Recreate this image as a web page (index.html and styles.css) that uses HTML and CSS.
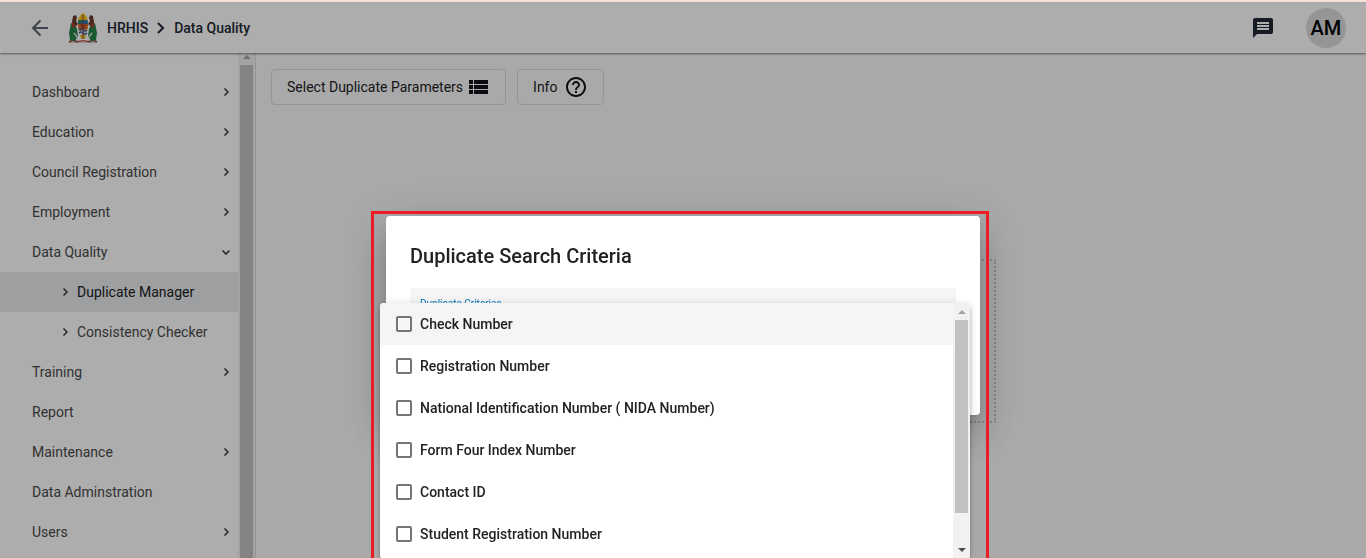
FILE: index.html
```html
<!DOCTYPE html>
<html lang="en">
<head>
<meta charset="utf-8">
<title>HRHIS - Data Quality</title>
<link rel="stylesheet" href="styles.css">
</head>
<body>
<svg class="sprite" aria-hidden="true">
  <symbol id="chevron" viewBox="0 0 10 10"><path d="M3.500 1.500 7 5 3.500 8.500" fill="none" stroke="currentColor" stroke-width="1.300"/></symbol>
</svg>
<div class="strip"></div>
<div class="app">
  <header class="header">
    <button class="icon-button" aria-label="Back"><svg width="18" height="18" viewBox="0 0 18 18" fill="none" stroke="currentColor" stroke-width="2"><path d="M17 9H2.500M9.500 1.500 2 9 9.500 16.500"/></svg></button>
    <svg class="crest" width="30" height="32" viewBox="0 0 30 32">
      <path d="M1 29Q5 26 9 28 L12 25H18L21 28Q25 26 29 29L29 31H1Z" fill="#d8d0c8"/>
      <path d="M1 30 5 28 9 30M21 30 25 28 29 30" stroke="#8a4a40" stroke-width="1.500" fill="none"/>
      <path d="M4 10 5 4 8 3 9 6 8 9 10 12 8 14 5 13Z" fill="#6b3a30"/>
      <path d="M26 10 25 4 22 3 21 6 22 9 20 12 22 14 25 13Z" fill="#6b3a30"/>
      <path d="M3 11 7 12 9 17 10 24 7 29 2 28 1 21Z" fill="#26854a"/>
      <path d="M27 11 23 12 21 17 20 24 23 29 28 28 29 21Z" fill="#26854a"/>
      <path d="M4 10 7 12 7 16 4 15M26 10 23 12 23 16 26 15" fill="#a63b32"/>
      <path d="M6 21 9 25M24 21 21 25" stroke="#e4dcd4" stroke-width="1.500"/>
      <path d="M15 1C18 3 20 6 20 11C20 19 18 25 15 29C12 25 10 19 10 11C10 6 12 3 15 1Z" fill="#f3c51d"/>
      <path d="M10.500 8H19.500L20 12H10Z" fill="#267bc0"/>
      <path d="M10.500 8H16L11 12H10Z" fill="#298752"/>
      <path d="M10 12H20L19.500 17H10.500Z" fill="#d7642c"/>
      <path d="M10.500 17H19.500L18 23H12Z" fill="#e9e6ee"/>
      <path d="M11 18Q13 16 15 18T19 18M11 21Q13 19 15 21T19 21" stroke="#3466b3" stroke-width="1.500" fill="none"/>
      <path d="M15 3V28M12 11 18 19M18 11 12 19" stroke="#8a3c2a"/>
      <path d="M9 26Q15 30 21 26" stroke="#fff" stroke-width="2" fill="none"/>
      <path d="M9 30Q15 27 21 30" stroke="#c92c2c" stroke-width="1" fill="none"/>
    </svg>
    <nav class="crumbs" aria-label="Breadcrumb"><a href="#">HRHIS</a><svg width="8" height="12" viewBox="0 0 8 12" fill="none" stroke="currentColor" stroke-width="2"><path d="M1 1 6 6 1 11"/></svg><a href="#">Data Quality</a></nav>
    <button class="icon-button messages" aria-label="Messages"><svg width="24" height="24" viewBox="0 0 24 24" fill="currentColor"><path d="M20 2H4C2.900 2 2.010 2.900 2.010 4L2 22l4-4h14c1.100 0 2-.9 2-2V4c0-1.100-.9-2-2-2zM18 14H6v-2h12v2zm0-3H6V9h12v2zm0-3H6V6h12v2z"/></svg></button>
    <button class="avatar">AM</button>
  </header>
  <div class="body">
    <aside class="sidebar">
      <nav class="menu" aria-label="Main">
        <a href="#">Dashboard<svg class="chev"><use href="#chevron"/></svg></a>
        <a href="#">Education<svg class="chev"><use href="#chevron"/></svg></a>
        <a href="#">Council Registration<svg class="chev"><use href="#chevron"/></svg></a>
        <a href="#">Employment<svg class="chev"><use href="#chevron"/></svg></a>
        <a href="#">Data Quality<svg class="chev open"><use href="#chevron"/></svg></a>
        <a class="sub active" href="#"><svg class="chev"><use href="#chevron"/></svg>Duplicate Manager</a>
        <a class="sub" href="#"><svg class="chev"><use href="#chevron"/></svg>Consistency Checker</a>
        <a href="#">Training<svg class="chev"><use href="#chevron"/></svg></a>
        <a href="#">Report</a>
        <a href="#">Maintenance<svg class="chev"><use href="#chevron"/></svg></a>
        <a href="#">Data Adminstration</a>
        <a href="#">Users<svg class="chev"><use href="#chevron"/></svg></a>
      </nav>
      <div class="scrollbar side-scroll"><i class="arrow up"></i><i class="thumb"></i></div>
    </aside>
    <main class="main">
      <div class="toolbar">
        <button class="outlined">Select Duplicate Parameters<svg width="19" height="14" viewBox="0 0 19 14" fill="#15121a"><path d="M0 0h4v4H0zM5 0h14v4H5zM0 5h4v4H0zM5 5h14v4H5zM0 10h4v4H0zM5 10h14v4H5z"/></svg></button>
        <button class="outlined info">Info<svg width="24" height="24" viewBox="0 0 24 24" fill="#15121a"><path d="M11 18h2v-2h-2v2zm1-16C6.480 2 2 6.480 2 12s4.480 10 10 10 10-4.480 10-10S17.520 2 12 2zm0 18c-4.410 0-8-3.590-8-8s3.590-8 8-8 8 3.590 8 8-3.590 8-8 8zm0-14c-2.210 0-4 1.790-4 4h2c0-1.100.9-2 2-2s2 .9 2 2c0 2-3 1.750-3 5h2c0-2.250 3-2.500 3-5 0-2.210-1.790-4-4-4z"/></svg></button>
      </div>
      <div class="placeholder"></div>
    </main>
  </div>
</div>
<div class="overlay">
  <section class="dialog" role="dialog" aria-labelledby="dialog-title">
    <h1 id="dialog-title">Duplicate Search Criteria</h1>
    <div class="field">Duplicate Criterias</div>
    <div class="highlight"></div>
    <div class="panel">
      <div class="options">
        <label class="hover"><input type="checkbox">Check Number</label>
        <label><input type="checkbox">Registration Number</label>
        <label><input type="checkbox">National Identification Number ( NIDA Number)</label>
        <label><input type="checkbox">Form Four Index Number</label>
        <label><input type="checkbox">Contact ID</label>
        <label><input type="checkbox">Student Registration Number</label>
      </div>
      <div class="scrollbar panel-scroll"><i class="arrow up"></i><i class="thumb"></i><i class="arrow down"></i></div>
    </div>
  </section>
</div>
</body>
</html>
```
FILE: styles.css
```css
* { box-sizing: border-box; }
html, body { height: 100%; }
body {
  margin: 0;
  display: flex;
  flex-direction: column;
  overflow: hidden;
  font: 14px/20px Roboto, sans-serif;
  color: #222;
}
a { color: inherit; text-decoration: none; }
button { font: inherit; color: inherit; background: none; border: 0; padding: 0; }
svg { display: block; flex: none; }
.sprite { position: absolute; width: 0; height: 0; }
.strip { height: 2px; flex: none; background: #fbe3da; }
.app { flex: 1; min-height: 0; display: flex; flex-direction: column; }

.header {
  flex: none;
  display: flex;
  align-items: center;
  height: 51px;
  padding: 0 20px 0 31px;
  background: #fff;
  box-shadow: 0 1px 2px rgba(0, 0, 0, .5);
  z-index: 1;
}
.icon-button { color: #5a6572; }
.crest { margin: 0 9px 0 19px; }
.crumbs { display: flex; align-items: center; gap: 9px; font-weight: 500; color: #212934; }
.header .messages { margin-left: auto; color: #212934; }
.avatar {
  width: 40px;
  height: 40px;
  margin-left: 31px;
  border-radius: 50%;
  background: #dcdcdc;
  color: #000;
  font-size: 20px;
  font-weight: 500;
}

.body { flex: 1; min-height: 0; display: flex; }
.sidebar { flex: none; width: 256px; display: flex; background: #fff; border-right: 1px solid #dcdcdc; overflow: hidden; }
.menu { flex: 1; padding-top: 19px; }
.menu a { display: flex; align-items: center; justify-content: space-between; height: 40px; padding: 0 7px 0 32px; color: #4a4a4a; }
.menu .sub { justify-content: flex-start; gap: 7px; padding-left: 60px; }
.menu .active { background: #e8eaed; color: #222; }
.chev { width: 10px; height: 10px; color: #222; }
.open { transform: rotate(90deg); }

.scrollbar { flex: none; display: flex; flex-direction: column; align-items: center; background: #f1f1f1; }
.thumb { width: 13px; background: #c1c1c1; }
.arrow { width: 0; height: 0; border: 4px solid transparent; }
.up { border-top: 0; border-bottom-color: #a3a3a3; }
.down { border-bottom: 0; border-top-color: #505050; }
.side-scroll { width: 17px; }
.side-scroll .up { margin: 2px 0 6px; }
.side-scroll .thumb { flex: 1; }

.main { flex: 1; background: #fafafa; padding: 16px 15px; }
.toolbar { display: flex; gap: 11px; }
.outlined {
  display: flex;
  align-items: center;
  gap: 6px;
  height: 36px;
  padding: 0 17px 0 15px;
  border: 1px solid #dcdcdc;
  border-radius: 4px;
}
.info { gap: 7px; padding-right: 15px; }
.placeholder { width: 370px; height: 164px; margin: 154px auto 0; border: 2px dotted #ccc; }

.overlay { position: fixed; inset: 2px 0 0; display: flex; justify-content: center; align-items: flex-start; padding-top: 214px; background: rgba(0, 0, 0, .32); z-index: 2; overflow: hidden; }
.dialog {
  position: relative;
  width: 594px;
  height: 199px;
  padding: 24px;
  border-radius: 4px;
  background: #fff;
  box-shadow: 0 11px 15px -7px rgba(0, 0, 0, .2), 0 24px 38px 3px rgba(0, 0, 0, .14), 0 9px 46px 8px rgba(0, 0, 0, .12);
}
.dialog h1 { margin: 0 0 16px; font-size: 20px; line-height: 32px; font-weight: 500; color: #222; }
.field { height: 56px; padding: 6px 10px; border-radius: 4px 4px 0 0; background: #f5f5f5; font-size: 10px; color: #0277bd; }
.highlight { position: absolute; inset: -5px -9px -200px -15px; border: 3px solid #ed1c24; }
.panel {
  position: absolute;
  top: 87px;
  left: -6px;
  right: 10px;
  height: 256px;
  display: flex;
  overflow: hidden;
  border-radius: 4px;
  background: #fff;
  box-shadow: 0 2px 4px -1px rgba(0, 0, 0, .2), 0 4px 5px rgba(0, 0, 0, .14), 0 1px 10px rgba(0, 0, 0, .12);
}
.options { flex: 1; }
.options label { display: flex; align-items: center; gap: 8px; height: 42px; padding: 0 16px; font-weight: 500; color: #222; }
.options .hover { background: #f5f5f5; }
.options input { appearance: none; width: 16px; height: 16px; margin: 0; border: 2px solid #757575; border-radius: 2px; }
.panel-scroll { width: 17px; }
.panel-scroll .up { margin: 7px 0 6px; }
.panel-scroll .thumb { height: 193px; }
.panel-scroll .down { margin: auto 0 7px; }
```
